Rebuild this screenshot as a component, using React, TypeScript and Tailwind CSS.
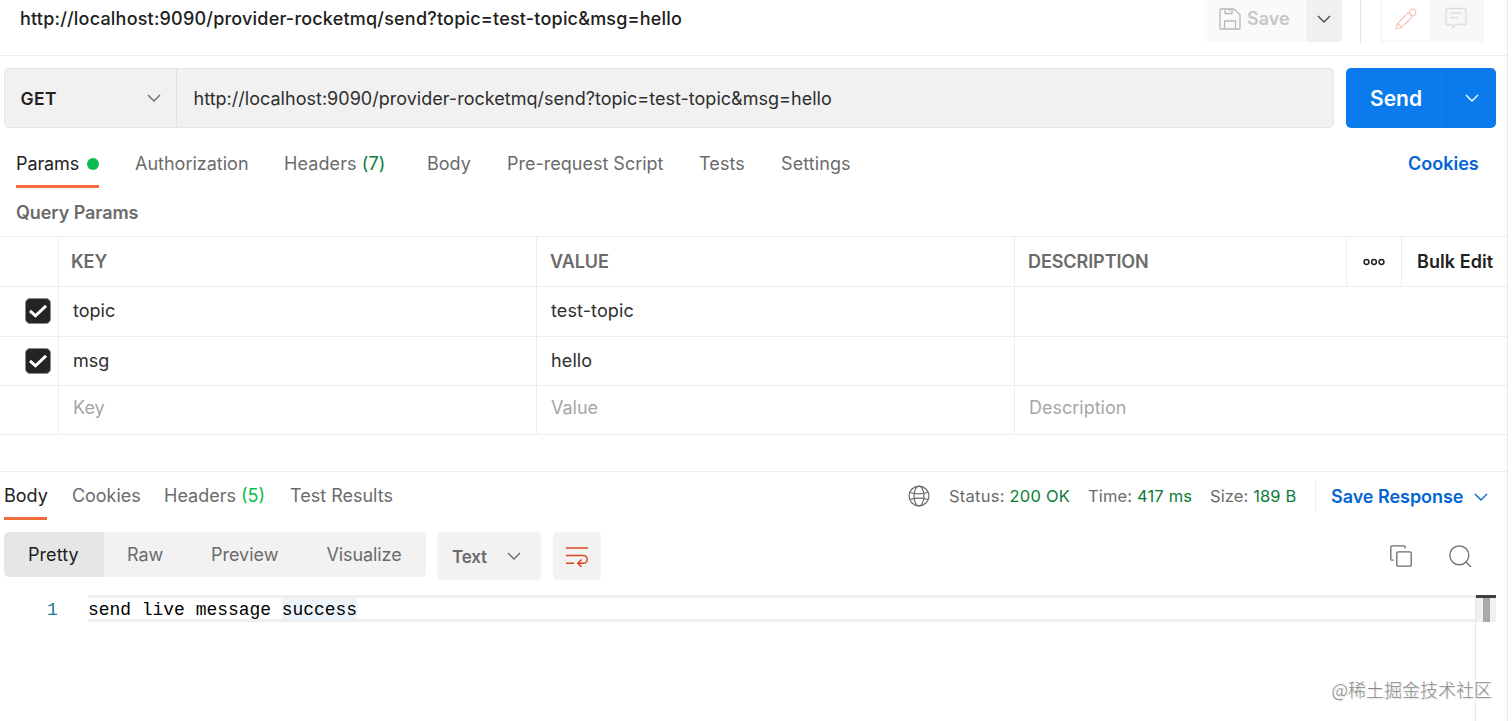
import React from "react";

const Chevron = ({ className }: { className: string }) => (
  <svg viewBox="0 0 14 8" className={`h-[8px] w-[14px] shrink-0 ${className}`} fill="none" stroke="currentColor" strokeWidth="1.4">
    <path d="M1 1l6 6 6-6" />
  </svg>
);

const SaveIcon = () => (
  <svg viewBox="0 0 22 22" className="h-[22px] w-[22px] shrink-0" fill="none" stroke="#b8b8b8" strokeWidth="1.3" strokeLinejoin="round">
    <path d="M2 1h12.500L21 6.500V20a1 1 0 0 1-1 1H2a1 1 0 0 1-1-1V2a1 1 0 0 1 1-1z" />
    <path d="M6 1v4.500h7V1M10.200 1v2.200M5.500 21v-8h11v8" />
  </svg>
);

const PencilIcon = () => (
  <svg viewBox="0 0 22 22" className="h-[22px] w-[22px] shrink-0" fill="none" stroke="#fbc4ba" strokeWidth="1.2" strokeLinejoin="round">
    <path d="M1 21l1.500-5.500L13.500 4.500l4 4L6.500 19.500z" />
    <circle cx="17.600" cy="4.400" r="3.200" />
    <path d="M2.500 15.500l4 4" />
  </svg>
);

const CommentIcon = () => (
  <svg viewBox="0 0 22 22" className="h-[22px] w-[22px] shrink-0" fill="none" stroke="#dedede" strokeWidth="1.3" strokeLinejoin="round">
    <path d="M2 1.500h18a1 1 0 0 1 1 1v14a1 1 0 0 1-1 1h-9.500L7.500 20.500v-3H2a1 1 0 0 1-1-1v-14a1 1 0 0 1 1-1z" />
    <path d="M5 6h12M5 10.500h8" />
  </svg>
);

const GlobeIcon = () => (
  <svg viewBox="0 0 22 22" className="h-[22px] w-[22px] shrink-0" fill="none" stroke="#6b6b6b" strokeWidth="1.2">
    <circle cx="11" cy="11" r="9.900" />
    <ellipse cx="11" cy="11" rx="5" ry="9.900" />
    <path d="M1.800 7.500c5.500 1.700 12.900 1.700 18.400 0M1.800 14.500c5.500-1.700 12.900-1.700 18.400 0" />
  </svg>
);

const CopyIcon = () => (
  <svg viewBox="0 0 22 22" className="h-[22px] w-[22px] shrink-0" fill="none" stroke="#6b6b6b" strokeWidth="1.3">
    <path d="M3.600 15.200H2a1.200 1.200 0 0 1-1.200-1.200V2A1.200 1.200 0 0 1 2 .8h12A1.200 1.200 0 0 1 15.200 2v1.500" />
    <rect x="6.800" y="6.800" width="14.400" height="14.400" rx="1.200" />
  </svg>
);

const SearchIcon = () => (
  <svg viewBox="0 0 23 22" className="h-[22px] w-[23px] shrink-0" fill="none" stroke="#6b6b6b" strokeWidth="1.300">
    <circle cx="10.300" cy="10.300" r="9.500" />
    <path d="M17 17l5 5" />
  </svg>
);

const WrapIcon = () => (
  <svg viewBox="0 0 22 20" className="h-[20px] w-[22px] shrink-0" fill="none" stroke="#d8481c" strokeWidth="1.500">
    <path d="M0 1h22M0 8.500h17.300a3.900 3.900 0 0 1 0 7.800H12M0 16.300h8M15.500 12.500L11.800 16.300l3.700 3.700" />
  </svg>
);

const Check = () => (
  <span className="flex h-[26px] w-[26px] items-center justify-center rounded-[5px] border-[1.5px] border-[#8c8c8c] bg-[#242424]">
    <svg viewBox="0 0 18 14" className="h-[14px] w-[18px] shrink-0" fill="none" stroke="#fff" strokeWidth="3">
      <path d="M1 6.800l5.500 5L17 1.800" />
    </svg>
  </span>
);

const rows = [
  { key: "topic", value: "test-topic" },
  { key: "msg", value: "hello" },
];

export default function App() {
  return (
    <div className="flex h-[721px] w-[1512px] overflow-hidden bg-white font-['Inter',sans-serif] text-[18px] leading-[22px] font-[375] whitespace-nowrap text-[#6b6b6b]">
      <main className="flex w-[1508px] shrink-0 flex-col border-r border-[#e9e9e9]">
        <header className="flex h-[56px] shrink-0 items-start border-b border-[#ededed] pl-[20px]">
          <h1 className="w-[1184px] pt-[8px] text-[18px] font-medium tracking-[0.2px] text-[#212121]">
            http://localhost:9090/provider-rocketmq/send?topic=test-topic&amp;msg=hello
          </h1>
          <button className="flex h-[42px] w-[101px] items-start gap-[6px] bg-[#fafafa] pt-[8px] pl-[15px] font-semibold text-[#c6c6c6]">
            <SaveIcon />
            <span>Save</span>
          </button>
          <button className="ml-px flex h-[42px] w-[36px] justify-center rounded-br-[3px] bg-[#f0f0f0] pt-[15px]">
            <Chevron className="text-[#4a4a4a]" />
          </button>
          <span className="ml-[18px] h-[43px] w-px bg-[#e6e6e6]" />
          <div className="ml-[19px] flex h-[42px] w-[104px] bg-[#f7f7f7] pb-[2px] pl-[2px]">
            <span className="flex w-[48px] justify-center rounded-b-[4px] bg-white pt-[8px]">
              <PencilIcon />
            </span>
            <span className="flex w-[52px] justify-center pt-[7px]">
              <CommentIcon />
            </span>
          </div>
        </header>

        <section className="flex h-[72px] shrink-0 pt-[12px] pl-[4px]">
          <div className="flex h-[60px] w-[1330px] rounded-[5px] border border-[#e6e6e6] bg-[#f1f1f1]">
            <button className="flex w-[172px] items-center justify-between border-r border-[#e2e2e2] pr-[15px] pl-[15.5px] font-semibold text-[#212121]">
              <span className="pt-px text-[17.500px] tracking-[0.4px]">GET</span>
              <Chevron className="text-[#6b6b6b]" />
            </button>
            <div className="flex items-center pt-px pl-[16.5px] tracking-[0.02px] text-[#2e2e2e]">
              http://localhost:9090/provider-rocketmq/send?topic=test-topic&amp;msg=hello
            </div>
          </div>
          <div className="ml-[12px] flex h-[60px] w-[150px] rounded-[5px] bg-[#097bed] text-white">
            <button className="w-[101px] border-r border-[#0a6fd8] pt-px text-[21px] font-semibold">Send</button>
            <button className="flex flex-1 items-center justify-center">
              <Chevron className="text-white" />
            </button>
          </div>
        </section>

        <nav className="flex h-[60px] shrink-0 items-start pl-[16px]">
          <div className="flex h-[60px] w-[83px] items-center justify-between border-b-[3px] border-[#f26b3a] pt-[15px] text-[#212121]">
            <span className="tracking-[-0.1px]">Params</span>
            <span className="h-[12px] w-[12px] rounded-full bg-[#0cbb52]" />
          </div>
          <span className="ml-[36px] w-[149px] pt-[25px]">Authorization</span>
          <span className="w-[143px] pt-[25px] tracking-[0.1px]">Headers <span className="text-[#0b7d37]">(7)</span></span>
          <span className="w-[80px] pt-[25px]">Body</span>
          <span className="w-[192px] pt-[25px]">Pre-request Script</span>
          <span className="w-[82px] pt-[25px] tracking-[0.1px]">Tests</span>
          <span className="flex-1 pt-[25px] tracking-[0.1px]">Settings</span>
          <span className="w-[99px] pt-[25px] font-semibold text-[#0265d2]">Cookies</span>
        </nav>

        <h2 className="flex h-[48px] shrink-0 items-center pt-[2px] pl-[16px] font-semibold tracking-[-0.08px]">Query Params</h2>

        <section className="shrink-0 border-t border-[#ededed]">
          <div className="flex h-[50px] items-center border-b border-[#ededed] font-semibold tracking-[-0.08px]">
            <span className="h-full w-[59px] border-r border-[#ededed]" />
            <span className="flex h-full w-[478px] items-center border-r border-[#ededed] pl-[12px]">KEY</span>
            <span className="flex h-full w-[478px] items-center border-r border-[#ededed] pl-[13px]">VALUE</span>
            <span className="flex h-full w-[332px] items-center border-r border-[#ededed] pl-[13px]">DESCRIPTION</span>
            <span className="flex h-full w-[55px] items-center justify-center border-r border-[#ededed]">
              <svg viewBox="0 0 22 8" className="h-[8px] w-[22px]" fill="none" stroke="#212121" strokeWidth="1.500">
                <circle cx="3.500" cy="4" r="2.400" />
                <circle cx="11" cy="4" r="2.400" />
                <circle cx="18.500" cy="4" r="2.400" />
              </svg>
            </span>
            <span className="pl-[15px] tracking-[0.06px] text-[#212121]">Bulk Edit</span>
          </div>
          {rows.map((row) => (
            <div key={row.key} className="flex h-[49.500px] items-center border-b border-[#ededed] tracking-[0.12px] text-[#2e2e2e]">
              <span className="flex h-full w-[59px] items-center justify-end border-r border-[#ededed] pr-[7px]">
                <Check />
              </span>
              <span className="flex h-full w-[478px] items-center border-r border-[#ededed] pl-[14px] tracking-normal">{row.key}</span>
              <span className="flex h-full w-[478px] items-center border-r border-[#ededed] pl-[14px]">{row.value}</span>
            </div>
          ))}
          <div className="flex h-[49px] border-b border-[#ededed] text-[#a6a6a6]">
            <span className="h-full w-[59px] border-r border-[#ededed]" />
            <span className="h-full w-[478px] border-r border-[#ededed] pt-[11px] pl-[14px]">Key</span>
            <span className="h-full w-[478px] border-r border-[#ededed] pt-[11px] pl-[14px]">Value</span>
            <span className="pt-[11px] pl-[14px]">Description</span>
          </div>
        </section>

        <section className="mt-[36px] flex h-[49px] shrink-0 items-start border-t border-[#ededed] pl-[4px]">
          <span className="h-[48px] w-[43px] border-b-[3px] border-[#f26b3a] pt-[13px] text-[#212121]">Body</span>
          <span className="ml-[25px] w-[92px] pt-[13px] tracking-[-0.04px]">Cookies</span>
          <span className="w-[126px] pt-[13px]">Headers <span className="text-[#0cbb52]">(5)</span></span>
          <span className="flex-1 pt-[13px]">Test Results</span>
          <span className="w-[41px] pt-[13px]"><GlobeIcon /></span>
          <span className="w-[139px] pt-[13px] text-[16.500px] tracking-[0.24px]">Status: <span className="text-[#0b7d37]">200 OK</span></span>
          <span className="w-[122px] pt-[13px] text-[16.500px] tracking-[0.15px]">Time: <span className="text-[#0b7d37]">417 ms</span></span>
          <span className="w-[105px] pt-[13px] text-[16.500px] tracking-[0.12px]">Size: <span className="text-[#0b7d37]">189 B</span></span>
          <button className="mt-[9px] flex h-[31px] w-[192px] items-center gap-[11px] border-l border-[#ededed] pl-[15px] font-semibold tracking-[-0.04px] text-[#0265d2]">
            Save Response
            <Chevron className="text-[#0265d2]" />
          </button>
        </section>

        <section className="flex h-[75px] shrink-0 items-start pt-[12px] pl-[4px]">
          <div className="flex h-[45px] w-[422px] items-center overflow-hidden rounded-[5px] bg-[#f2f2f2]">
            <span className="flex h-full w-[100px] items-center bg-[#e6e6e6] pl-[24px] tracking-[0.06px] text-[#212121]">Pretty</span>
            <span className="w-[84px] pl-[23px]">Raw</span>
            <span className="w-[115px] pl-[23px]">Preview</span>
            <span className="pl-[23.5px] tracking-[-0.1px]">Visualize</span>
          </div>
          <button className="ml-[11px] flex h-[48px] w-[104px] items-center gap-[20px] rounded-[5px] bg-[#f2f2f2] pl-[15px] text-[17px] font-semibold tracking-[-0.2px]">
            <span className="pt-px">Text</span>
            <Chevron className="text-[#6b6b6b]" />
          </button>
          <button className="ml-[12px] flex h-[48px] w-[48px] items-center justify-center rounded-[5px] bg-[#f2f2f2] pt-[2px]">
            <WrapIcon />
          </button>
          <div className="ml-auto flex gap-[37px] pt-[13px] pr-[35px]">
            <CopyIcon />
            <SearchIcon />
          </div>
        </section>

        <section className="flex min-h-0 flex-1 items-start font-['Liberation_Mono',monospace] text-[17.940px]">
          <span className="w-[88px] pt-[4px] pl-[47px] text-[#237893]">1</span>
          <div className="flex h-[27px] w-[1387px] items-start border-y-[3px] border-[#eeeeee] text-black">
            <span className="pt-[1px]">send live message&nbsp;</span>
            <span className="h-[21px] bg-[#edf4fa] pt-[1px]">success</span>
          </div>
          <aside className="relative h-full w-[21px] border-l border-[#e6e6e6]">
            <div className="flex h-[27px] justify-center border-t-[3px] border-[#404040] bg-[#f0f0f0]">
              <span className="w-[7px] bg-[#a9a9a9]" />
            </div>
            <span className="absolute top-[83px] right-[4px] font-['Noto_Sans_CJK_SC',sans-serif] text-[18px] leading-[22px] font-light text-[#8a8a8a] [text-shadow:1px_1px_1px_#dddddd]">
              @稀土掘金技术社区
            </span>
          </aside>
        </section>
      </main>
    </div>
  );
}
